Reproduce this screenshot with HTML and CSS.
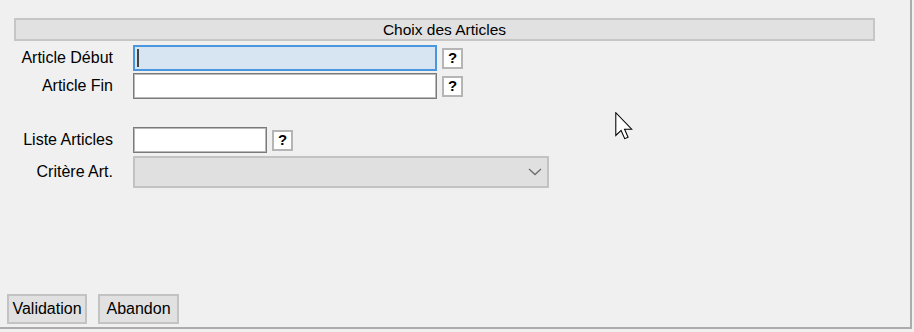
FILE: index.html
```html
<!DOCTYPE html>
<html lang="fr">
<head>
    <meta charset="UTF-8">
    <title>Choix des Articles</title>
    <link rel="stylesheet" href="styles.css">
</head>
<body>
    <div class="window">
        <div class="section-title">Choix des Articles</div>

        <div class="row">
            <label for="art-debut">Article Début</label>
            <div class="field focused"><span class="caret"></span></div>
            <button class="help">?</button>
        </div>
        <div class="row row-tight">
            <label for="art-fin">Article Fin</label>
            <div class="field"></div>
            <button class="help">?</button>
        </div>

        <div class="row row-spaced">
            <label>Liste Articles</label>
            <div class="field short"></div>
            <button class="help">?</button>
        </div>
        <div class="row row-combo">
            <label>Critère Art.</label>
            <div class="combo">
                <svg width="14" height="8" viewBox="0 0 14 8">
                    <path d="M1 1 L7 6.5 L13 1" fill="none" stroke="#6d6d6d" stroke-width="1.3"/>
                </svg>
            </div>
        </div>

        <div class="actions">
            <button class="btn btn-validation">Validation</button>
            <button class="btn btn-abandon">Abandon</button>
        </div>

        <svg class="cursor" width="19" height="28" viewBox="0 0 12.5 18.5">
            <path d="M0.5 0.5 L0.5 15.5 L4 12.2 L6.4 17.6 L8.6 16.7 L6.3 11.4 L11 11.4 Z" fill="#fff" stroke="#000" stroke-width="0.7" stroke-linejoin="miter"/>
        </svg>
    </div>
</body>
</html>
```

FILE: styles.css
```css
body {
    margin: 0;
    background-color: #f0f0f0;
    font-family: "Liberation Sans", Arial, sans-serif;
    font-size: 16px;
    color: #000;
}

.window {
    position: relative;
    box-sizing: border-box;
    width: 912px;
    height: 329px;
    border-right: 2px solid #acacac;
    border-bottom: 2px solid #acacac;
    display: flex;
    flex-direction: column;
    padding: 18px 0 3px 0;
}

.section-title {
    box-sizing: border-box;
    width: 861px;
    height: 23px;
    margin-left: 14px;
    background-color: #e1e1e1;
    border: 2px solid #c6c6c6;
    text-align: center;
    font-size: 15.5px;
    line-height: 20px;
}

.row {
    display: flex;
    align-items: center;
    height: 26px;
    margin-top: 4px;
}

.row-tight {
    margin-top: 2px;
}

.row-spaced {
    margin-top: 28px;
}

.row-combo {
    height: 32px;
    margin-top: 3px;
}

.row label {
    width: 113px;
    margin-right: 20px;
    text-align: right;
    line-height: 18px;
}

.field {
    box-sizing: border-box;
    width: 304px;
    height: 26px;
    background-color: #fff;
    border: 1px solid #7a7a7a;
    box-shadow: inset 0 0 0 1px #b9b9b9;
    position: relative;
}

.field.short {
    width: 134px;
}

.field.focused {
    background-color: #d7e4f2;
    border: 2px solid #4a97df;
    box-shadow: none;
}

.caret {
    position: absolute;
    left: 2px;
    top: 2px;
    width: 2px;
    height: 18px;
    background-color: #444;
}

.help {
    box-sizing: border-box;
    width: 21px;
    height: 21px;
    margin-left: 5px;
    padding: 0;
    background-color: #fff;
    border: 2px solid #b5b5b5;
    font-family: "Liberation Sans", Arial, sans-serif;
    font-weight: bold;
    font-size: 15px;
    line-height: 16px;
    color: #000;
}

.combo {
    box-sizing: border-box;
    width: 416px;
    height: 32px;
    background-color: #e0e0e0;
    border: 2px solid #c2c2c2;
    display: flex;
    align-items: center;
    justify-content: flex-end;
    padding-right: 5px;
}

.actions {
    margin-top: auto;
    display: flex;
    gap: 11px;
    padding-left: 7px;
}

.btn {
    box-sizing: border-box;
    height: 30px;
    padding: 0;
    background-color: #e1e1e1;
    border: 2px solid #c3c3c3;
    font-family: "Liberation Sans", Arial, sans-serif;
    font-size: 16px;
    color: #000;
}

.btn-validation {
    width: 80px;
}

.btn-abandon {
    width: 81px;
}

.cursor {
    position: absolute;
    left: 615px;
    top: 112px;
}
```
